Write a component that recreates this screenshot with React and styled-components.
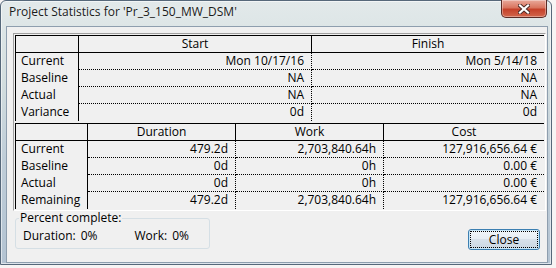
import React from 'react'
import styled, { createGlobalStyle } from 'styled-components'

const GlobalStyle = createGlobalStyle`
  body {
    margin: 0;
    background: #f7f4f4;
    font-family: "Segoe UI", "Open Sans", sans-serif;
    font-size: 12px;
    color: #000;
  }
`

const topCols = ['Start', 'Finish']
const topRows = [
  ['Current', 'Mon 10/17/16', 'Mon 5/14/18'],
  ['Baseline', 'NA', 'NA'],
  ['Actual', 'NA', 'NA'],
  ['Variance', '0d', '0d'],
]

const bottomCols = ['Duration', 'Work', 'Cost']
const bottomRows = [
  ['Current', '479.2d', '2,703,840.64h', '127,916,656.64 €'],
  ['Baseline', '0d', '0h', '0.00 €'],
  ['Actual', '0d', '0h', '0.00 €'],
  ['Remaining', '479.2d', '2,703,840.64h', '127,916,656.64 €'],
]

function StatsTable({ cols, rows, widths }) {
  return (
    <Table $cols={widths}>
      <Head />
      {cols.map((c, i) => (
        <Head key={c} $last={i === cols.length - 1}>{c}</Head>
      ))}
      {rows.map((row, r) =>
        row.map((cell, i) =>
          i === 0 ? (
            <Label key={r + '-' + i}>{cell}</Label>
          ) : (
            <Value
              key={r + '-' + i}
              $last={i === row.length - 1}
              $end={r === rows.length - 1}
            >
              {cell}
            </Value>
          )
        )
      )}
    </Table>
  )
}

function CloseGlyph() {
  return (
    <svg width="12" height="10" viewBox="0 0 12 10">
      <path d="M2 1.5 L10 8.5 M10 1.5 L2 8.5" stroke="#4a2a26" strokeWidth="4" strokeLinecap="square" />
      <path d="M2 1.5 L10 8.5 M10 1.5 L2 8.5" stroke="#fff" strokeWidth="2.2" strokeLinecap="square" />
    </svg>
  )
}

export default function App() {
  return (
    <>
      <GlobalStyle />
      <Window>
        <TitleBar>
          <Title>Project Statistics for 'Pr_3_150_MW_DSM'</Title>
          <CloseBox><CloseGlyph /></CloseBox>
        </TitleBar>
        <Client>
          <Frame>
            <StatsTable cols={topCols} rows={topRows} widths="63px 233px 232px" />
            <StatsTable cols={bottomCols} rows={bottomRows} widths="72px 148px 148px 160px" />
          </Frame>
          <Footer>
            <Group>
              <Legend>Percent complete:</Legend>
              <Stat>Duration:<b>0%</b></Stat>
              <Stat>Work:<b>0%</b></Stat>
            </Group>
            <Button>Close</Button>
          </Footer>
        </Client>
      </Window>
    </>
  )
}

const Window = styled.div`
  width: 552px;
  height: 265px;
  box-sizing: border-box;
  border: 1px solid #56687a;
  border-radius: 6px 6px 0 0;
  padding: 0 4px 2px 6px;
  display: flex;
  flex-direction: column;
  background: linear-gradient(180deg, #e2e9ea 0%, #d3dedf 30%, #bfcdd8 60%, #b3c3d2 100%);
  box-shadow: inset 0 0 0 1px rgba(255, 255, 255, 0.55);
`

const TitleBar = styled.div`
  height: 26px;
  display: flex;
  justify-content: space-between;
  align-items: flex-start;
`

const Title = styled.div`
  padding: 3px 0 0 2px;
  line-height: 16px;
  color: #1b1b1b;
  text-shadow: 0 0 6px rgba(255, 255, 255, 0.9);
`

const CloseBox = styled.div`
  width: 46px;
  height: 18px;
  margin-top: -1px;
  box-sizing: border-box;
  border: 1px solid #5b2b25;
  border-top: none;
  border-radius: 0 0 5px 5px;
  display: flex;
  align-items: center;
  justify-content: center;
  background: linear-gradient(180deg, #e9a99b 0%, #d9755f 45%, #c5412a 55%, #d2664c 100%);
  box-shadow: inset 0 0 0 1px rgba(255, 255, 255, 0.35);
`

const Client = styled.div`
  flex: 1;
  background: #f0f0f0;
  padding: 6px 1px 0 6px;
  box-shadow: 0 0 0 1px #8e9eae;
  display: flex;
  flex-direction: column;
`

const Frame = styled.div`
  width: 533px;
  box-sizing: border-box;
  padding: 1px;
  border: 1px solid;
  border-color: #a0a0a0 #ffffff #ffffff #a0a0a0;
  display: flex;
  flex-direction: column;
  gap: 2px;
`

const Table = styled.div`
  display: grid;
  grid-template-columns: ${p => p.$cols};
  grid-auto-rows: 17px;
  border-top: 1px solid #000;
  border-left: 1px solid #000;
`

const Head = styled.div`
  box-sizing: border-box;
  border-bottom: 1px solid #000;
  border-right: ${p => (p.$last ? 'none' : '1px solid #000')};
  text-align: center;
  line-height: 16px;
`

const Label = styled.div`
  box-sizing: border-box;
  border-right: 1px solid #000;
  padding-left: 5px;
  line-height: 16px;
  white-space: nowrap;
`

const Value = styled.div`
  box-sizing: border-box;
  border-right: ${p => (p.$last ? 'none' : '1px dotted #000')};
  border-bottom: ${p => (p.$end ? 'none' : '1px dotted #000')};
  padding-right: 7px;
  text-align: right;
  line-height: 16px;
  white-space: nowrap;
`

const Footer = styled.div`
  display: flex;
  justify-content: space-between;
  align-items: flex-start;
`

const Group = styled.fieldset`
  margin: 0 0 0 2px;
  width: 195px;
  height: 38px;
  box-sizing: border-box;
  border: 1px solid #d5dfe5;
  border-radius: 3px;
  padding: 3px 0 0 7px;
  display: flex;
  gap: 37px;
`

const Legend = styled.legend`
  padding: 0 1px;
  margin-left: -4px;
  line-height: 14px;
`

const Stat = styled.span`
  line-height: 16px;
  white-space: nowrap;
  b {
    font-weight: normal;
    margin-left: 5px;
  }
`

const Button = styled.button`
  width: 72px;
  height: 21px;
  margin: 18px 6px 0 0;
  box-sizing: border-box;
  padding: 0;
  font: inherit;
  color: #000;
  border: 1px solid #3c7fb1;
  border-radius: 3px;
  background: linear-gradient(180deg, #f2f6f9 0%, #e6edf3 49%, #d7e1ea 50%, #cbd7e2 100%);
  box-shadow: inset 0 0 0 1px #c8e6f7;
  outline: 1px dotted #000;
  outline-offset: -3px;
`
